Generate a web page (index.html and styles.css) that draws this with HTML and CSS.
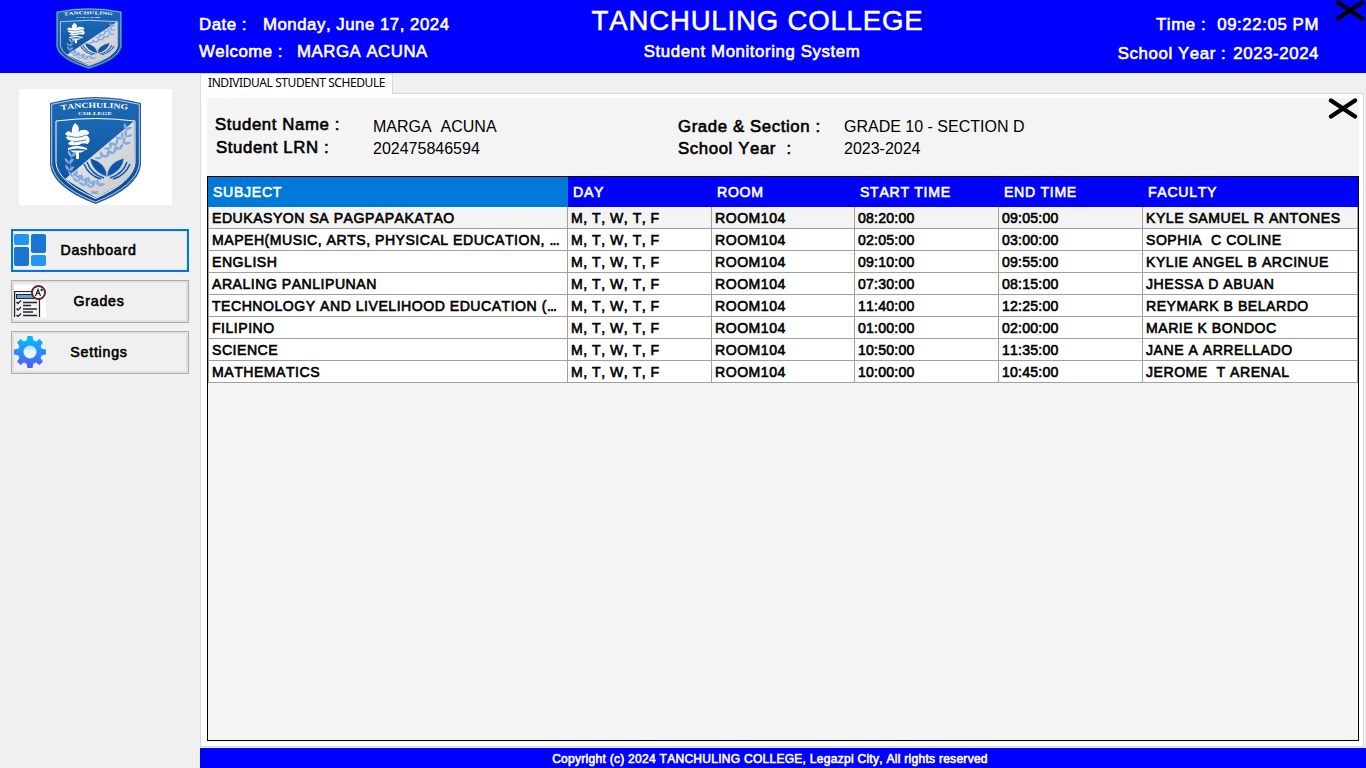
FILE: index.html
```html
<!DOCTYPE html>
<html lang="en">
<head>
<meta charset="utf-8">
<title>Student Monitoring System</title>
<link rel="stylesheet" href="styles.css">
</head>
<body>
<svg class="defs" aria-hidden="true">
  <defs>
    <linearGradient id="silver" x1="0" y1="0" x2="1" y2="1"><stop offset="0" stop-color="#f4f4f6"/><stop offset="1" stop-color="#c3c5cb"/></linearGradient>
    <linearGradient id="navy" x1="0" y1="0" x2="0" y2="1"><stop offset="0" stop-color="#1c68b4"/><stop offset="1" stop-color="#0b4c98"/></linearGradient>
    <linearGradient id="gear" x1="0" y1="0" x2="0" y2="1"><stop offset="0" stop-color="#00c0ff"/><stop offset="1" stop-color="#5558ff"/></linearGradient>
    <linearGradient id="hub" x1="0" y1="0" x2="0" y2="1"><stop offset="0" stop-color="#addcff"/><stop offset=".5" stop-color="#eaf6ff"/><stop offset="1" stop-color="#eaf6ff"/></linearGradient>
    <path id="arc" d="M11 13.2Q45.500 8.200 81 13.200"/>
    <clipPath id="field"><path d="M6 24Q45.500 19 85 24V66Q83 85 45.500 101.500Q8 85 6 66Z"/></clipPath>
    <g id="leaf"><path d="M0 0Q-4-2-3-7Q1-4 0 0ZM0 0Q4 0 6-4Q1-5 0 0Z"/></g>
    <symbol id="shield" viewBox="0 0 91 107" preserveAspectRatio="none">
      <path fill="#285f99" d="M0 6Q45.500-6 91 6V68Q88 91 45.500 107Q3 91 0 68Z"/>
      <path fill="url(#navy)" stroke="#dce9f5" stroke-width=".8" d="M1.700 7.300Q45.500-4 89.300 7.300V67.500Q86 89 45.500 105Q5 89 1.700 67.500Z"/>
      <path fill="url(#navy)" stroke="#fff" stroke-width="1" d="M6 24Q45.500 19 85 24V66Q83 85 45.500 101.500Q8 85 6 66Z"/>
      <g clip-path="url(#field)">
        <path fill="url(#silver)" d="M84 24L15 82L46 101L85 80Z"/>
        <g fill="#84aadd">
          <use href="#leaf" transform="translate(76 33) rotate(12)"/><use href="#leaf" transform="translate(76 40) rotate(18)"/><use href="#leaf" transform="translate(74 47) rotate(25)"/><use href="#leaf" transform="translate(70 53) rotate(-30)"/><use href="#leaf" transform="translate(64 57) rotate(-40)"/><use href="#leaf" transform="translate(58 60) rotate(-50)"/><use href="#leaf" transform="translate(52 61) rotate(-65)"/>
          <use href="#leaf" transform="translate(72 42) rotate(-50)"/><use href="#leaf" transform="translate(67 48) rotate(-50)"/><use href="#leaf" transform="translate(61 52) rotate(-60)"/>
          <use href="#leaf" transform="translate(21 60)"/><use href="#leaf" transform="translate(19 67) rotate(-12)"/><use href="#leaf" transform="translate(19 74) rotate(-5)"/><use href="#leaf" transform="translate(23 80) rotate(-15)"/><use href="#leaf" transform="translate(28 85) rotate(-25)"/><use href="#leaf" transform="translate(35 89) rotate(-35)"/><use href="#leaf" transform="translate(42 91) rotate(-30)"/><use href="#leaf" transform="translate(48 89) rotate(20)"/>
          <use href="#leaf" transform="translate(26 80) rotate(30)"/><use href="#leaf" transform="translate(33 84) rotate(10)"/><use href="#leaf" transform="translate(40 87) rotate(10)"/>
        </g>
        <path fill="none" stroke="#84aadd" stroke-width=".7" d="M77 29Q78 53 49 61M22 57Q13 87 55 87"/>
        <path fill="#0f55a5" stroke="#e7e8eb" stroke-width=".5" d="M57 80Q57 66 40 61Q41 74 57 80ZM57 80Q57 66 74 61Q73 74 57 80Z"/>
        <path fill="none" stroke="#0f55a5" stroke-width="1.500" d="M37 65Q41 77 54 81M34 67Q39 79 51 82M77 65Q73 77 60 81M80 67Q75 79 63 82"/>
      </g>
      <path fill="#fff" d="M25 26Q31 30 28 35Q33 31 38 34Q41 37 36 38Q42 41 38 47Q32 45 29 48Q20 49 18 47Q20 43 26 44Q16 44 16 40Q21 38 26 40Q17 40 15 37Q18 32 22 36Q21 31 25 26ZM18 51Q27 47 37 51L37 53Q27 50 18 53ZM20 53.500H35L31 55.500H29V62H26V55.500H23Z"/>
      <path fill="none" stroke="#175da9" stroke-width=".8" d="M19 39Q28 42 36 38M23 45Q31 44 36 43"/>
      <text class="crest-name"><textPath href="#arc" textLength="67" lengthAdjust="spacingAndGlyphs">TANCHULING</textPath></text>
      <text class="crest-sub" x="28" y="17.500" textLength="34" lengthAdjust="spacingAndGlyphs">COLLEGE</text>
      <text class="crest-year" x="40.500" y="97">1945</text>
    </symbol>
    <symbol id="cross" viewBox="0 0 30 21"><path d="M3 2.500L27 18.500M27 2.500L3 18.500" stroke="#000" stroke-width="4.300" stroke-linecap="round"/></symbol>
  </defs>
</svg>

<header class="topbar">
  <div class="brand"><svg class="brand-crest"><use href="#shield"/></svg></div>
  <div class="info">
    <div class="line"><span class="date-label">Date :</span><span>Monday, June 17, 2024</span></div>
    <div class="line"><span class="welcome-label">Welcome :</span><span>MARGA ACUNA</span></div>
  </div>
  <div class="titles">
    <h1 class="title">TANCHULING COLLEGE</h1>
    <div class="line subtitle">Student Monitoring System</div>
  </div>
  <div class="clock">
    <div class="line"><span class="time-label">Time :</span><span>09:22:05 PM</span></div>
    <div class="line year"><span class="sy-label">School Year :</span><span>2023-2024</span></div>
  </div>
  <svg class="close-app"><use href="#cross"/></svg>
</header>

<div class="body">
  <aside class="sidebar">
    <div class="photo"><svg class="photo-crest"><use href="#shield"/></svg></div>
    <nav class="menu">
      <button class="item active">
        <svg class="icon" viewBox="0 0 32 32"><g fill="#2196f3"><rect width="15" height="11" rx="2"/><rect x="17" y="21" width="15" height="11" rx="2"/></g><g fill="#1976d2"><rect y="13" width="15" height="19" rx="2"/><rect x="17" width="15" height="19" rx="2"/></g></svg>
        <span class="label">Dashboard</span>
      </button>
      <button class="item">
        <svg class="icon" viewBox="0 0 32 32"><path fill="#fff" d="M0 0H32V32H0Z"/><path fill="#f0f0f2" stroke="#25252b" stroke-width="1.200" d="M.6 32V6.500H25.500V32"/><rect x="2.500" y="9.500" width="17" height="4" fill="#63a4d8" stroke="#25252b"/><path stroke="#25252b" stroke-width="1.300" fill="none" d="M9 17.500H23M9 20.500H17M9 24H23M9 27H19M9 30.500H23M2.500 17l1.500 1.500 3-3M2.500 23.500l1.500 1.500 3-3M2.500 30l1.500 1.500 3-3"/><circle cx="24.500" cy="7.500" r="6.500" fill="#fff" stroke="#5b2634" stroke-width="2"/><path d="M21.500 11L24 4.500L26.500 11M22 8.500H26M26.300 5H29M27.600 3.700V6.300" fill="none" stroke="#222" stroke-width="1.200"/></svg>
        <span class="label">Grades</span>
      </button>
      <button class="item">
        <svg class="icon" viewBox="0 0 32 32"><path fill="url(#gear)" d="M13.500 0H18.500L19.300 4.200L22.100 5.400L25.600 3L29 6.400L26.600 9.900L27.800 12.700L32 13.500V18.500L27.800 19.300L26.600 22.100L29 25.600L25.600 29L22.100 26.600L19.300 27.800L18.500 32H13.500L12.700 27.800L9.900 26.600L6.400 29L3 25.600L5.400 22.100L4.200 19.300L0 18.500V13.500L4.200 12.700L5.400 9.900L3 6.400L6.400 3L9.900 5.400L12.700 4.200Z"/><circle cx="16" cy="16" r="6.500" fill="url(#hub)"/></svg>
        <span class="label">Settings</span>
      </button>
    </nav>
  </aside>

  <main class="content">
    <div class="tabs"><div class="tab">INDIVIDUAL STUDENT SCHEDULE</div><div class="tab-rest"></div></div>
    <div class="pane">
      <section class="sheet">
        <div class="details">
          <div class="field name-label">Student Name :</div><div class="value">MARGA&nbsp; ACUNA</div>
          <div class="field">Grade &amp; Section :</div><div class="value">GRADE 10 - SECTION D</div>
          <div class="field lrn-label">Student LRN :</div><div class="value">202475846594</div>
          <div class="field">School Year &nbsp;:</div><div class="value">2023-2024</div>
          <svg class="close-tab"><use href="#cross"/></svg>
        </div>
        <div class="grid">
          <div class="row head"><span class="sel">SUBJECT</span><span>DAY</span><span>ROOM</span><span>START TIME</span><span>END TIME</span><span>FACULTY</span></div>
          <div class="row current"><span>EDUKASYON SA PAGPAPAKATAO</span><span>M, T, W, T, F</span><span>ROOM104</span><span class="time">08:20:00</span><span class="time">09:05:00</span><span>KYLE SAMUEL R ANTONES</span></div>
          <div class="row"><span>MAPEH(MUSIC, ARTS, PHYSICAL EDUCATION, <i class="more">...</i></span><span>M, T, W, T, F</span><span>ROOM104</span><span class="time">02:05:00</span><span class="time">03:00:00</span><span>SOPHIA&nbsp; C COLINE</span></div>
          <div class="row"><span>ENGLISH</span><span>M, T, W, T, F</span><span>ROOM104</span><span class="time">09:10:00</span><span class="time">09:55:00</span><span>KYLIE ANGEL B ARCINUE</span></div>
          <div class="row"><span>ARALING PANLIPUNAN</span><span>M, T, W, T, F</span><span>ROOM104</span><span class="time">07:30:00</span><span class="time">08:15:00</span><span>JHESSA D ABUAN</span></div>
          <div class="row"><span>TECHNOLOGY AND LIVELIHOOD EDUCATION (<i class="more">...</i></span><span>M, T, W, T, F</span><span>ROOM104</span><span class="time">11:40:00</span><span class="time">12:25:00</span><span>REYMARK B BELARDO</span></div>
          <div class="row"><span>FILIPINO</span><span>M, T, W, T, F</span><span>ROOM104</span><span class="time">01:00:00</span><span class="time">02:00:00</span><span>MARIE K BONDOC</span></div>
          <div class="row"><span>SCIENCE</span><span>M, T, W, T, F</span><span>ROOM104</span><span class="time">10:50:00</span><span class="time">11:35:00</span><span>JANE A ARRELLADO</span></div>
          <div class="row"><span>MATHEMATICS</span><span>M, T, W, T, F</span><span>ROOM104</span><span class="time">10:00:00</span><span class="time">10:45:00</span><span>JEROME&nbsp; T ARENAL</span></div>
        </div>
      </section>
    </div>
    <footer class="footer">Copyright (c) 2024 TANCHULING COLLEGE, Legazpi City, All rights reserved</footer>
  </main>
</div>
</body>
</html>
```
FILE: styles.css
```css
* { box-sizing: border-box; }
body {
  margin: 0;
  width: 1366px;
  height: 768px;
  overflow: hidden;
  background: #f0f0f0;
  color: #000;
  font-family: "Liberation Sans", Arial, sans-serif;
  font-kerning: none;
  white-space: nowrap;
  display: flex;
  flex-direction: column;
}
.defs { position: absolute; width: 0; height: 0; }
.crest-name, .crest-sub, .crest-year { fill: #fff; font-family: "Liberation Serif", serif; font-weight: bold; letter-spacing: 0; }
.crest-name { font-size: 7.5px; }
.crest-sub { font-size: 5px; }
.crest-year { font-size: 4px; fill: #4d7fbd; }

.topbar {
  position: relative;
  height: 73px;
  background: #0000ff;
  color: #fff;
  display: grid;
  grid-template-columns: 199px 380px 357px 1fr;
}
.brand { padding: 8px 0 0 56px; }
.brand-crest { display: block; width: 66px; height: 61px; }
.line, .field {
  font-size: 16.8px;
  letter-spacing: 0.6px;
  -webkit-text-stroke: 0.6px currentColor;
}
.line { display: flex; height: 27px; line-height: 27px; }
.info, .clock { padding-top: 11px; }
.info .line { letter-spacing: 0.53px; }
.date-label { width: 64px; }
.welcome-label { width: 98px; }
.title {
  margin: 0;
  padding-top: 3px;
  height: 38px;
  line-height: 36px;
  font-size: 27.6px;
  font-weight: normal;
  letter-spacing: 0.8px;
  -webkit-text-stroke: 0.5px currentColor;
  text-align: center;
}
.subtitle { justify-content: center; padding-right: 11px; }
.clock { padding-right: 47px; }
.clock .line { justify-content: flex-end; }
.clock .year { padding-top: 2px; height: 29px; }
.time-label { margin-right: 11px; }
.sy-label { margin-right: 7px; }
.close-app { position: absolute; left: 1335px; top: 0; width: 30px; height: 21px; }

.body { flex: 1; display: flex; min-height: 0; }
.sidebar { width: 200px; padding: 16px 11px 0; }
.photo { width: 153px; height: 116px; margin-left: 8px; padding: 8px 0 0 31px; background: #fff; }
.photo-crest { display: block; width: 91px; height: 107px; }
.menu { margin-top: 24px; display: flex; flex-direction: column; gap: 8px; }
.item {
  width: 178px;
  height: 43px;
  padding: 0 0 0 2px;
  display: grid;
  align-items: center;
  background: #f0f0f0;
  border: 1px solid #adadad;
  box-shadow: inset 0 0 0 2px #e1e1e1;
  color: #000;
  font: 14.2px "Liberation Sans", Arial, sans-serif;
  letter-spacing: 0.75px;
  -webkit-text-stroke: 0.6px currentColor;
}
.item.active { border: 2px solid #0078d7; padding-left: 1px; box-shadow: inset 0 0 0 1px #e1e1e1; }
.icon { grid-area: 1 / 1; width: 32px; height: 32px; margin-bottom: 2px; -webkit-text-stroke: 0; }
.label { grid-area: 1 / 1; text-align: center; padding: 0 4px 2px 0; }

.content { flex: 1; display: flex; flex-direction: column; min-width: 0; }
.tabs { display: flex; height: 21px; }
.tab {
  width: 193px;
  padding-left: 7px;
  background: #fff;
  border: 1px solid #d9d9d9;
  border-bottom: 0;
  font: 12px/18px "Noto Sans", sans-serif;
  letter-spacing: -0.42px;
}
.tab-rest { width: 971px; border-bottom: 1px solid #d9d9d9; }
.pane {
  width: 1164px;
  height: 653px;
  padding: 4px 4px 5px 6px;
  background: #fff;
  border: solid #d9d9d9;
  border-width: 0 1px 1px;
}
.sheet { height: 643px; background: #f4f4f4; display: flex; flex-direction: column; }
.details {
  position: relative;
  height: 78px;
  padding: 16px 0 0 8px;
  display: grid;
  grid-template-columns: 158px 305px 166px 1fr;
  grid-template-rows: 22px 23px;
}
.field { line-height: 25px; }
.name-label { margin-top: -2px; }
.lrn-label { margin: -1px 0 0 1px; }
.value { font-size: 16px; line-height: 26px; }
.close-tab { position: absolute; right: 1px; top: 0; width: 30px; height: 21px; }

.grid {
  flex: 1;
  border: 1px solid #000;
  font-size: 14.1px;
  letter-spacing: 0.5px;
  -webkit-text-stroke: 0.6px currentColor;
}
.row {
  display: grid;
  grid-template-columns: 360px 144px 143px 144px 144px 215px;
  height: 22px;
  line-height: 22px;
  background: #fff;
}
.row > span { padding-left: 3px; border: solid #a0a0a0; border-width: 0 1px 1px 0; overflow: hidden; }
.row > span:first-child { border-left-width: 1px; }
.row > .time { letter-spacing: 0.22px; }
.more { font-style: normal; letter-spacing: -0.8px; }
.row.current { background: #f4f4f4; }
.row.head { height: 30px; line-height: 31px; background: #0000ff; color: #fff; letter-spacing: 0.7px; }
.row.head > span { border: 0; padding-left: 5px; }
.row.head > .sel { background: #0078d7; }
.footer {
  margin-top: 1px;
  height: 20px;
  background: #0000ff;
  color: #fff;
  text-align: center;
  padding-right: 26px;
  font-size: 12px;
  line-height: 22px;
  letter-spacing: 0.28px;
  -webkit-text-stroke: 0.6px currentColor;
}
```
